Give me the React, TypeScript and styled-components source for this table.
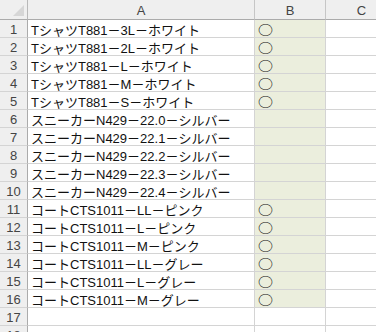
import React from 'react';
import styled, { createGlobalStyle } from 'styled-components';

const GlobalStyle = createGlobalStyle`
  html, body {
    margin: 0;
    padding: 0;
    background: #ffffff;
  }
  body {
    font-family: "Liberation Sans", "Noto Sans CJK JP", sans-serif;
    overflow: hidden;
  }
`;

const rows: { name: string; mark: boolean }[] = [
  { name: 'TシャツT881－3L－ホワイト', mark: true },
  { name: 'TシャツT881－2L－ホワイト', mark: true },
  { name: 'TシャツT881－L－ホワイト', mark: true },
  { name: 'TシャツT881－M－ホワイト', mark: true },
  { name: 'TシャツT881－S－ホワイト', mark: true },
  { name: 'スニーカーN429－22.0－シルバー', mark: false },
  { name: 'スニーカーN429－22.1－シルバー', mark: false },
  { name: 'スニーカーN429－22.2－シルバー', mark: false },
  { name: 'スニーカーN429－22.3－シルバー', mark: false },
  { name: 'スニーカーN429－22.4－シルバー', mark: false },
  { name: 'コートCTS1011－LL－ピンク', mark: true },
  { name: 'コートCTS1011－L－ピンク', mark: true },
  { name: 'コートCTS1011－M－ピンク', mark: true },
  { name: 'コートCTS1011－LL－グレー', mark: true },
  { name: 'コートCTS1011－L－グレー', mark: true },
  { name: 'コートCTS1011－M－グレー', mark: true },
  { name: '', mark: false },
  { name: '', mark: false },
];

const Viewport = styled.div`
  width: 376px;
  height: 332px;
  overflow: hidden;
`;

const Sheet = styled.div`
  display: grid;
  grid-template-columns: 28px 227px 71px 72px;
  grid-template-rows: 20px;
  grid-auto-rows: 18px;
  width: 398px;
  font-size: 13px;
  color: #111;
`;

const Corner = styled.div`
  position: relative;
  background: #efefef;
  border-right: 1px solid #b8b8b8;
  border-bottom: 1px solid #ababab;

  &::after {
    content: '';
    position: absolute;
    right: 3px;
    bottom: 3px;
    border-style: solid;
    border-width: 0 0 11px 11px;
    border-color: transparent transparent #d6d6d6 transparent;
  }
`;

const ColHead = styled.div`
  display: flex;
  align-items: center;
  justify-content: center;
  background: #efefef;
  color: #444;
  border-right: 1px solid #c6c6c6;
  border-bottom: 1px solid #ababab;
  padding-top: 1px;
`;

const RowHead = styled.div`
  display: flex;
  align-items: center;
  justify-content: center;
  background: #efefef;
  color: #444;
  border-right: 1px solid #ababab;
  border-bottom: 1px solid #d4d4d4;
  padding-top: 1px;
`;

const Cell = styled.div<{ $tint?: boolean }>`
  display: flex;
  align-items: center;
  padding: 1px 0 0 3px;
  white-space: nowrap;
  background: ${({ $tint }) => ($tint ? '#ebeedd' : '#ffffff')};
  border-right: 1px solid #d4d4d4;
  border-bottom: 1px solid #d4d4d4;
`;

// long names spill over into column B, as a spreadsheet does
const NameCell = styled(Cell)`
  position: relative;
  z-index: 1;
  background: transparent;
`;

const Mark = styled.span`
  display: inline-block;
  font-family: "Noto Sans CJK JP", sans-serif;
  font-size: 15px;
  line-height: 1;
  transform: scaleY(0.82);
`;

export default function App() {
  return (
    <Viewport>
      <GlobalStyle />
      <Sheet>
        <Corner />
        <ColHead>A</ColHead>
        <ColHead>B</ColHead>
        <ColHead>C</ColHead>
        {rows.map((row, i) => (
          <React.Fragment key={i}>
            <RowHead>{i + 1}</RowHead>
            <NameCell>{row.name}</NameCell>
            <Cell $tint={i < 16}>{row.mark && <Mark>○</Mark>}</Cell>
            <Cell />
          </React.Fragment>
        ))}
      </Sheet>
    </Viewport>
  );
}
